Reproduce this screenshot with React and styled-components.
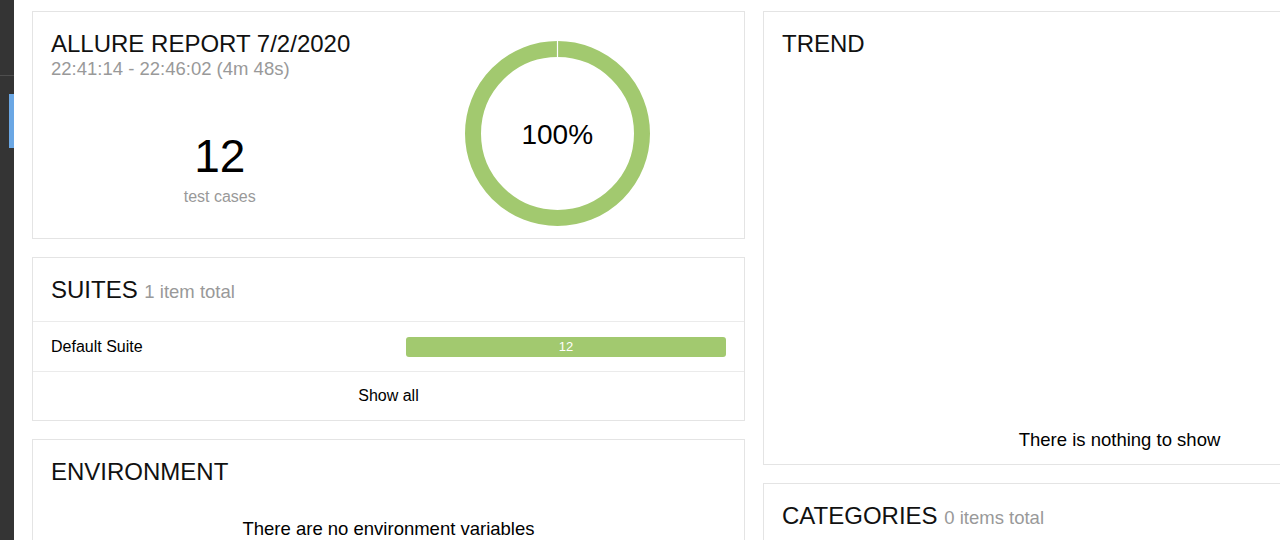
import React from "react";
import styled, { createGlobalStyle } from "styled-components";

const GlobalStyle = createGlobalStyle`
  html, body {
    margin: 0;
    padding: 0;
    background: #fff;
    overflow: hidden;
  }
  body {
    font-family: "Liberation Sans", Arial, Helvetica, sans-serif;
    color: #000;
  }
  *, *::before, *::after { box-sizing: border-box; }
`;

const GREEN = "#a2c96f";
const LINE = "#e4e4e4";

const Page = styled.div`
  display: flex;
  width: 1280px;
  height: 540px;
  overflow: hidden;
`;

const Sidebar = styled.nav`
  flex: 0 0 14px;
  background: #343434;
  display: flex;
  flex-direction: column;
`;

const SideBrand = styled.div`
  height: 76px;
  border-bottom: 1px solid #4e4e4e;
`;

const SideItem = styled.div`
  margin-top: 18px;
  height: 54px;
  display: flex;
  justify-content: flex-end;
`;

const ActiveMark = styled.span`
  width: 5px;
  background: #6ba7e4;
`;

const Content = styled.main`
  flex: 0 0 auto;
  display: grid;
  grid-template-columns: 713px 713px;
  column-gap: 18px;
  align-items: start;
  padding: 11px 0 0 18px;
`;

const Column = styled.div`
  display: flex;
  flex-direction: column;
  gap: 18px;
`;

const Card = styled.section`
  background: #fff;
  border: 1px solid ${LINE};
  display: flex;
  flex-direction: column;
  height: ${(p) => (p.$h ? `${p.$h}px` : "auto")};
`;

const Header = styled.header`
  padding: 18px 18px 17px;
  border-bottom: ${(p) => (p.$divider ? `1px solid #ebebeb` : "none")};
`;

const Title = styled.h2`
  margin: 0;
  height: 28px;
  font-size: 24px;
  line-height: 28px;
  font-weight: 400;
  color: #111;
  white-space: nowrap;
`;

const Count = styled.span`
  font-size: 18.5px;
  line-height: 1;
  color: #999;
`;

const Subtitle = styled.div`
  font-size: 18.5px;
  line-height: 22px;
  color: #999;
`;

/* Summary widget */
const SummaryCard = styled(Card)`
  flex-direction: row;
  padding: 0 18px;
`;

const Half = styled.div`
  flex: 1 1 0;
  display: flex;
  flex-direction: column;
  padding-top: ${(p) => p.$top}px;
  align-items: ${(p) => (p.$center ? "center" : "stretch")};
`;

const Stat = styled.div`
  margin-top: 53px;
  text-align: center;
`;

const BigNumber = styled.div`
  font-size: 46px;
  line-height: 46px;
  color: #000;
`;

const StatCaption = styled.div`
  margin-top: 8px;
  font-size: 16px;
  line-height: 20px;
  color: #999;
`;

const Donut = styled.div`
  display: grid;
  place-items: center;
  width: 185px;
  height: 185px;
  & > * {
    grid-area: 1 / 1;
  }
`;

const DonutLabel = styled.div`
  font-size: 28px;
  line-height: 28px;
  padding-top: 2px;
  color: #000;
`;

/* Suites */
const Row = styled.div`
  display: flex;
  align-items: center;
  height: ${(p) => p.$h}px;
  padding: 0 18px;
  border-bottom: ${(p) => (p.$last ? "none" : "1px solid #ebebeb")};
  justify-content: ${(p) => (p.$center ? "center" : "flex-start")};
  font-size: 16px;
  color: #000;
`;

const RowName = styled.span`
  flex: 1;
`;

const Bar = styled.div`
  width: 320px;
  height: 20px;
  border-radius: 3px;
  background: ${GREEN};
  color: #fff;
  font-size: 13px;
  display: flex;
  align-items: center;
  justify-content: center;
`;

/* Empty states */
const EmptyText = styled.div`
  font-size: 18.5px;
  line-height: 22px;
  text-align: center;
  color: #000;
  padding: ${(p) => p.$pad};
`;

const TrendBody = styled.div`
  flex: 1;
  display: flex;
  align-items: flex-end;
  justify-content: center;
  padding-bottom: 13px;
`;

const CardSpacer = styled.div`
  height: 40px;
`;

function DonutChart() {
  return (
    <Donut>
      <svg width="185" height="185" viewBox="0 0 185 185">
        <circle cx="92.5" cy="92.5" r="84.5" fill="none" stroke={GREEN} strokeWidth="16" />
        <line x1="92.5" y1="0" x2="92.5" y2="17" stroke="#fff" strokeWidth="1.2" />
      </svg>
      <DonutLabel>100%</DonutLabel>
    </Donut>
  );
}

export default function App() {
  return (
    <>
      <GlobalStyle />
      <Page>
        <Sidebar>
          <SideBrand />
          <SideItem>
            <ActiveMark />
          </SideItem>
        </Sidebar>
        <Content>
          <Column>
            <SummaryCard $h={228}>
              <Half $top={18}>
                <Title>ALLURE REPORT 7/2/2020</Title>
                <Subtitle>22:41:14 - 22:46:02 (4m 48s)</Subtitle>
                <Stat>
                  <BigNumber>12</BigNumber>
                  <StatCaption>test cases</StatCaption>
                </Stat>
              </Half>
              <Half $top={29} $center>
                <DonutChart />
              </Half>
            </SummaryCard>

            <Card>
              <Header $divider>
                <Title>
                  SUITES <Count>1 item total</Count>
                </Title>
              </Header>
              <Row $h={50}>
                <RowName>Default Suite</RowName>
                <Bar>12</Bar>
              </Row>
              <Row $h={48} $center $last>
                Show all
              </Row>
            </Card>

            <Card>
              <Header>
                <Title>ENVIRONMENT</Title>
              </Header>
              <EmptyText $pad="15px 18px 24px">There are no environment variables</EmptyText>
            </Card>
          </Column>

          <Column>
            <Card $h={454}>
              <Header>
                <Title>TREND</Title>
              </Header>
              <TrendBody>
                <EmptyText $pad="0">There is nothing to show</EmptyText>
              </TrendBody>
            </Card>

            <Card>
              <Header>
                <Title>
                  CATEGORIES <Count>0 items total</Count>
                </Title>
              </Header>
              <CardSpacer />
            </Card>
          </Column>
        </Content>
      </Page>
    </>
  );
}
